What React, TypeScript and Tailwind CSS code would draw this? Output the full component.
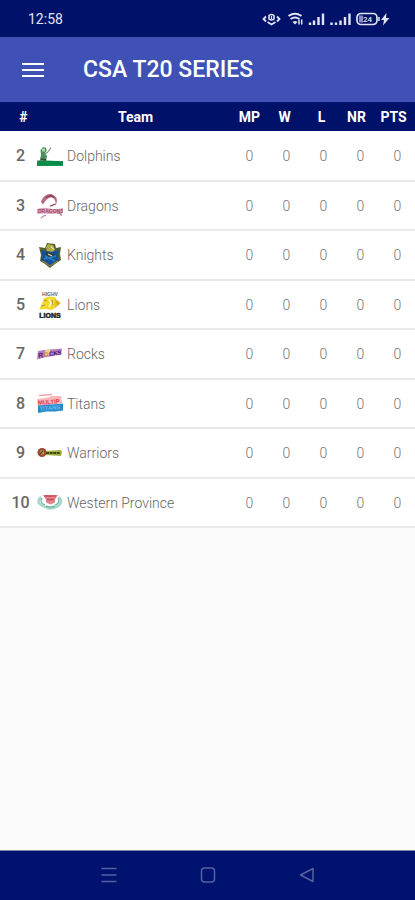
import React from "react";

type Team = { rank: number; name: string; logo: React.ReactNode };

const logoClass = "block size-[26px] shrink-0";
const logoFont = "'Liberation Sans', sans-serif";

function DolphinsLogo() {
  return (
    <svg className={logoClass} viewBox="0 0 26 26" aria-hidden="true">
      <path d="M0 17.500h9l17 .7v4.800H0z" fill="#0c9a50" />
      <path d="M2.500 18.500 4 12l-.5-5L6 4l3 .8.6 3L8 10l2 3-1 5.500z" fill="#4c8f5e" />
      <path d="M5 5.500h3v3H5z" fill="#a9d8a0" />
      <path d="M7.500 11c3-.5 4.500-3 6.500-6.500" fill="none" stroke="#8b9a90" strokeWidth="1.300" />
      <path d="M4 16l5 1" stroke="#2b5139" strokeWidth="1.600" />
      <text x="1" y="22.200" fontSize="5" fontWeight="700" fontFamily={logoFont} fill="#077a3e">DOLPHINS</text>
    </svg>
  );
}

function DragonsLogo() {
  return (
    <svg className={logoClass} viewBox="0 0 26 26" aria-hidden="true">
      <path d="M4 9C6 3 11 0 15 1.500c5 1.500 6 6 4 10-.4-3-1-5-3-6.500-3-1.500-6 .5-8 3.500l-2 3z" fill="#b56a82" />
      <path d="M9 4.500l5-2 3 2M13 13c3 0 4-2 6-2" fill="none" stroke="#8f3656" strokeWidth="1.200" />
      <path d="M0 16q7-2 13-.5t13-.5l-1 6-2-1q-9 1.500-17 .5l-6 .5z" fill="#dba9b8" />
      <text x="1" y="20" fontSize="5" fontWeight="700" fontFamily={logoFont} fill="#a04869">DRAGONS</text>
      <path d="M4 25q2-2.500 5-2.500M20 20q5 0 4 3" fill="none" stroke="#b56a82" strokeWidth="1.200" />
    </svg>
  );
}

function KnightsLogo() {
  return (
    <svg className={logoClass} viewBox="0 0 26 26" aria-hidden="true">
      <path d="M2 5l6 1 2-5 8 1 1 4 5-1-1 7 1 6-6 4-5 4-5-4-5-3 1-6z" fill="#59602f" />
      <path d="M4 8l5 1h9l4-1-1 6 1 4-5 3-4 3.500L9 21l-5-3 1-5z" fill="#164f9a" />
      <path d="M9 5l2-3 5 1 2 5-3 2-5-1z" fill="#b2a943" />
      <path d="M9 10l8 2 1 3-5 1-4-3z" fill="#363b3a" />
      <path d="M14 4.500l3 3M11 12l4 2" stroke="#dbdebf" strokeWidth="1.200" />
      <path d="M7 17l12-3M8 14l10 5" stroke="#2482bf" strokeWidth="1.500" />
      <path d="M5 19l4 2 4 3 4-3 4-2" fill="none" stroke="#a68a32" strokeWidth="1" />
    </svg>
  );
}

function LionsLogo() {
  return (
    <svg className={logoClass} viewBox="0 0 26 26" aria-hidden="true">
      <text x="13" y="4" fontSize="5" fontWeight="700" textAnchor="middle" fontFamily={logoFont} fill="#666">HIGHV</text>
      <path d="M7 6l5-1.500 7 1-1 5.500 1 4-4 3-6-1-7 .5 2.500-4.500z" fill="#f2d72c" />
      <path d="M18 6.500l6 4.500-6 5z" fill="#e3bd22" />
      <path d="M12 7l2 4-2 4" fill="none" stroke="#fffbe0" strokeWidth="1.500" />
      <path d="M7 8l3 1M15 8l1 5M4 14l4-1M20 9l1 4" stroke="#b1973a" strokeWidth="1" />
      <text x="13" y="25.500" fontSize="7" fontWeight="700" textAnchor="middle" fontFamily={logoFont} fill="#222" stroke="#222" strokeWidth=".5">LIONS</text>
    </svg>
  );
}

function RocksLogo() {
  return (
    <svg className={logoClass} viewBox="0 0 26 26" aria-hidden="true">
      <path d="M1 10l6-1 18-1.500-1 6-17 3-7 2z" fill="#b47fbe" />
      <path d="M8 9.500l5-1v5.500l-5 1z" fill="#f0d488" />
      <g transform="rotate(-7 13 13)">
        <text x="1" y="15.500" fontSize="7" fontWeight="700" fontFamily={logoFont} fill="#641c7b">R</text>
        <text x="7" y="15" fontSize="6" fontWeight="700" fontFamily={logoFont} fill="#c98543">O</text>
        <text x="12" y="15" fontSize="6" fontWeight="700" fontFamily={logoFont} fill="#4c1169">CKS</text>
      </g>
    </svg>
  );
}

function TitansLogo() {
  return (
    <svg className={logoClass} viewBox="0 0 26 26" aria-hidden="true">
      <path d="M2 4.500l13-1" stroke="#efa4a5" strokeWidth="1.500" />
      <path d="M0 8l8-1 8-2h8l1 7-13 2-11 2z" fill="#f8b6b8" />
      <path d="M1 14.500l13-1 12-1v7l-8 1H9l-8 1.500z" fill="#2389cb" />
      <g transform="rotate(-4 13 13)">
        <text x="1" y="13" fontSize="6" fontWeight="700" fontFamily={logoFont} fill="#e13c4a">MULTIP</text>
        <text x="2" y="19" fontSize="6" fontWeight="700" fontFamily={logoFont} fill="#75bbe5">TITANS</text>
      </g>
    </svg>
  );
}

function WarriorsLogo() {
  return (
    <svg className={logoClass} viewBox="0 0 26 26" aria-hidden="true">
      <path d="M8 11l16-1 1 2-1 4-16-1z" fill="#a1ad3c" />
      <circle cx="5" cy="12.500" r="4.500" fill="#9c4635" />
      <circle cx="5" cy="12.500" r="2.300" fill="#c4a044" />
      <path d="M3 14l3-3" stroke="#5d301b" strokeWidth="1.200" />
      <path d="M9 13h14" stroke="#3f4c18" strokeWidth="2" strokeDasharray="3 .6" />
    </svg>
  );
}

function WesternProvinceLogo() {
  return (
    <svg className={logoClass} viewBox="0 0 26 26" aria-hidden="true">
      <path d="M4 7q-5 5 0 8t9 3.500q5 0 9-3.500t0-8" fill="none" stroke="#a3d8cb" strokeWidth="2.600" />
      <path d="M5 8q-3 5 3 7M21 8q3 5-3 7" fill="none" stroke="#66b7a2" strokeWidth="1.200" />
      <path d="M6 5h15l-3 4.500v3l-4.500 2-4.500-2v-3z" fill="#e1848b" />
      <path d="M7 6h12M10 9.500h7" stroke="#c94c5a" strokeWidth="1.400" />
      <path d="M9 16q4 2 9 0" fill="none" stroke="#73b9a7" strokeWidth="1.500" />
    </svg>
  );
}

const teams: Team[] = [
  { rank: 2, name: "Dolphins", logo: <DolphinsLogo /> },
  { rank: 3, name: "Dragons", logo: <DragonsLogo /> },
  { rank: 4, name: "Knights", logo: <KnightsLogo /> },
  { rank: 5, name: "Lions", logo: <LionsLogo /> },
  { rank: 7, name: "Rocks", logo: <RocksLogo /> },
  { rank: 8, name: "Titans", logo: <TitansLogo /> },
  { rank: 9, name: "Warriors", logo: <WarriorsLogo /> },
  { rank: 10, name: "Western Province", logo: <WesternProvinceLogo /> },
];

function StatusBar() {
  return (
    <div className="flex h-[37px] items-center justify-between bg-[#00116a] pr-[25px] pl-7 text-[#e0e4f4]">
      <span className="text-sm">12:58</span>
      <svg className="block h-4 w-[128px]" viewBox="0 0 128 16" fill="none" stroke="currentColor" aria-hidden="true">
        {/* eye */}
        <path d="M4 5.500 1.500 8 4 10.500M15 5.500 17.500 8 15 10.500" strokeWidth="1.800" />
        <path d="M7 4.500q2.500-2 5 0v3.500q-2.500 2-5 0zM5.500 11l4 2.500 4-2.500" strokeWidth="1.600" />
        <path d="M9.500 5v3" strokeWidth="1.200" />
        {/* wifi */}
        <path d="M26.500 5q6.500-4.500 13 0M28.500 8q4.500-3 9 0" strokeWidth="2" />
        <path d="M30.500 11q2.500-2 5 0L33 13.500z" fill="currentColor" stroke="none" />
        <path d="M37 8.500v5M39.700 8.500v5" strokeWidth="1.500" />
        {/* signal bars */}
        <path d="M48 11.500v2.500M52 9.500V14M56.500 6v8M61 2.500V14" strokeWidth="2.400" />
        <path d="M69.500 11.500v2.500M74 11.500V14M78.500 9.500V14M83 6v8M87.500 2.500V14" strokeWidth="2.400" />
        {/* battery */}
        <rect x="95" y="2.500" width="20" height="11" rx="4" strokeWidth="1.700" />
        <path d="M97 4.500h4v7h-4z" fill="currentColor" fillOpacity=".6" stroke="none" />
        <text x="105.500" y="11" fontSize="8" fontWeight="500" textAnchor="middle" fontFamily="Roboto, sans-serif" fill="currentColor" stroke="none">24</text>
        <path d="M117 6v4" strokeWidth="1.500" />
        <path d="M124.500 2 119 9h3l-1 5.500 6.500-7.500H124z" fill="currentColor" stroke="none" />
      </svg>
    </div>
  );
}

export default function App() {
  const head = "p-0 text-center align-middle font-bold";
  return (
    <div className="flex min-h-screen flex-col bg-[#fafafa] font-['Roboto',sans-serif]">
      <StatusBar />
      <header className="flex h-[65px] items-center bg-[#4051b5] pl-[21px] text-white">
        <button type="button" aria-label="Open menu" className="flex h-10 w-[62px] items-center">
          <svg className="block h-4 w-6" viewBox="0 0 24 16" fill="none" stroke="currentColor" strokeWidth="2" aria-hidden="true">
            <path d="M1 2h22M1 8h22M1 14h22" />
          </svg>
        </button>
        <h1 className="text-[23px] leading-8 font-medium">CSA T20 SERIES</h1>
      </header>
      <main className="flex-1">
        <table className="w-full table-fixed border-collapse bg-white">
          <colgroup>
            <col className="w-[37px]" />
            <col />
            <col className="w-[37px]" />
            <col className="w-[37px]" />
            <col className="w-[37px]" />
            <col className="w-[37px]" />
            <col className="w-[37px]" />
          </colgroup>
          <thead>
            <tr className="h-[29px] bg-[#00116a] text-sm text-white">
              <th scope="col" className={`${head} pl-2.5`}>#</th>
              <th scope="col" className={`${head} pl-1`}>Team</th>
              <th scope="col" className={`${head} pl-0.5`}>MP</th>
              <th scope="col" className={`${head} pr-0.5`}>W</th>
              <th scope="col" className={`${head} pr-0.5`}>L</th>
              <th scope="col" className={`${head} pr-1.5`}>NR</th>
              <th scope="col" className={`${head} pr-1.5`}>PTS</th>
            </tr>
          </thead>
          <tbody>
            {teams.map((team) => (
              <tr key={team.rank} className="border-b-2 border-[#e9e9e9] text-sm odd:h-[50px] even:h-[49px]">
                <td className="p-0 pl-1 text-center text-base font-medium text-[#666]">{team.rank}</td>
                <td className="p-0">
                  <div className="flex items-center gap-1 font-light whitespace-nowrap text-[#666]">
                    {team.logo}
                    {team.name}
                  </div>
                </td>
                {["MP", "W", "L", "NR", "PTS"].map((key) => (
                  <td key={key} className="p-0 pl-0.5 text-center font-light text-[#777]">0</td>
                ))}
              </tr>
            ))}
          </tbody>
        </table>
      </main>
      <nav aria-label="System" className="flex h-[50px] items-center justify-center border-t border-[#7f88b4] bg-[#001270] pb-0.5 text-[#56619f]">
        <button type="button" aria-label="Recent apps" className="flex h-10 w-[99px] items-center justify-center">
          <svg className="block size-4" viewBox="0 0 16 16" fill="none" stroke="currentColor" strokeWidth="1.500" aria-hidden="true">
            <path d="M.5 1.500h15M.5 8h15M.5 14.500h15" />
          </svg>
        </button>
        <button type="button" aria-label="Home" className="flex h-10 w-[99px] items-center justify-center">
          <svg className="block size-4" viewBox="0 0 16 16" fill="none" stroke="currentColor" strokeWidth="1.500" aria-hidden="true">
            <rect x="1.500" y="1" width="13" height="14" rx="3" />
          </svg>
        </button>
        <button type="button" aria-label="Back" className="flex h-10 w-[99px] items-center justify-center">
          <svg className="block size-4" viewBox="0 0 16 16" fill="none" stroke="currentColor" strokeWidth="1.500" strokeLinejoin="round" aria-hidden="true">
            <path d="M14 1.500v13L1.500 8z" />
          </svg>
        </button>
      </nav>
    </div>
  );
}
